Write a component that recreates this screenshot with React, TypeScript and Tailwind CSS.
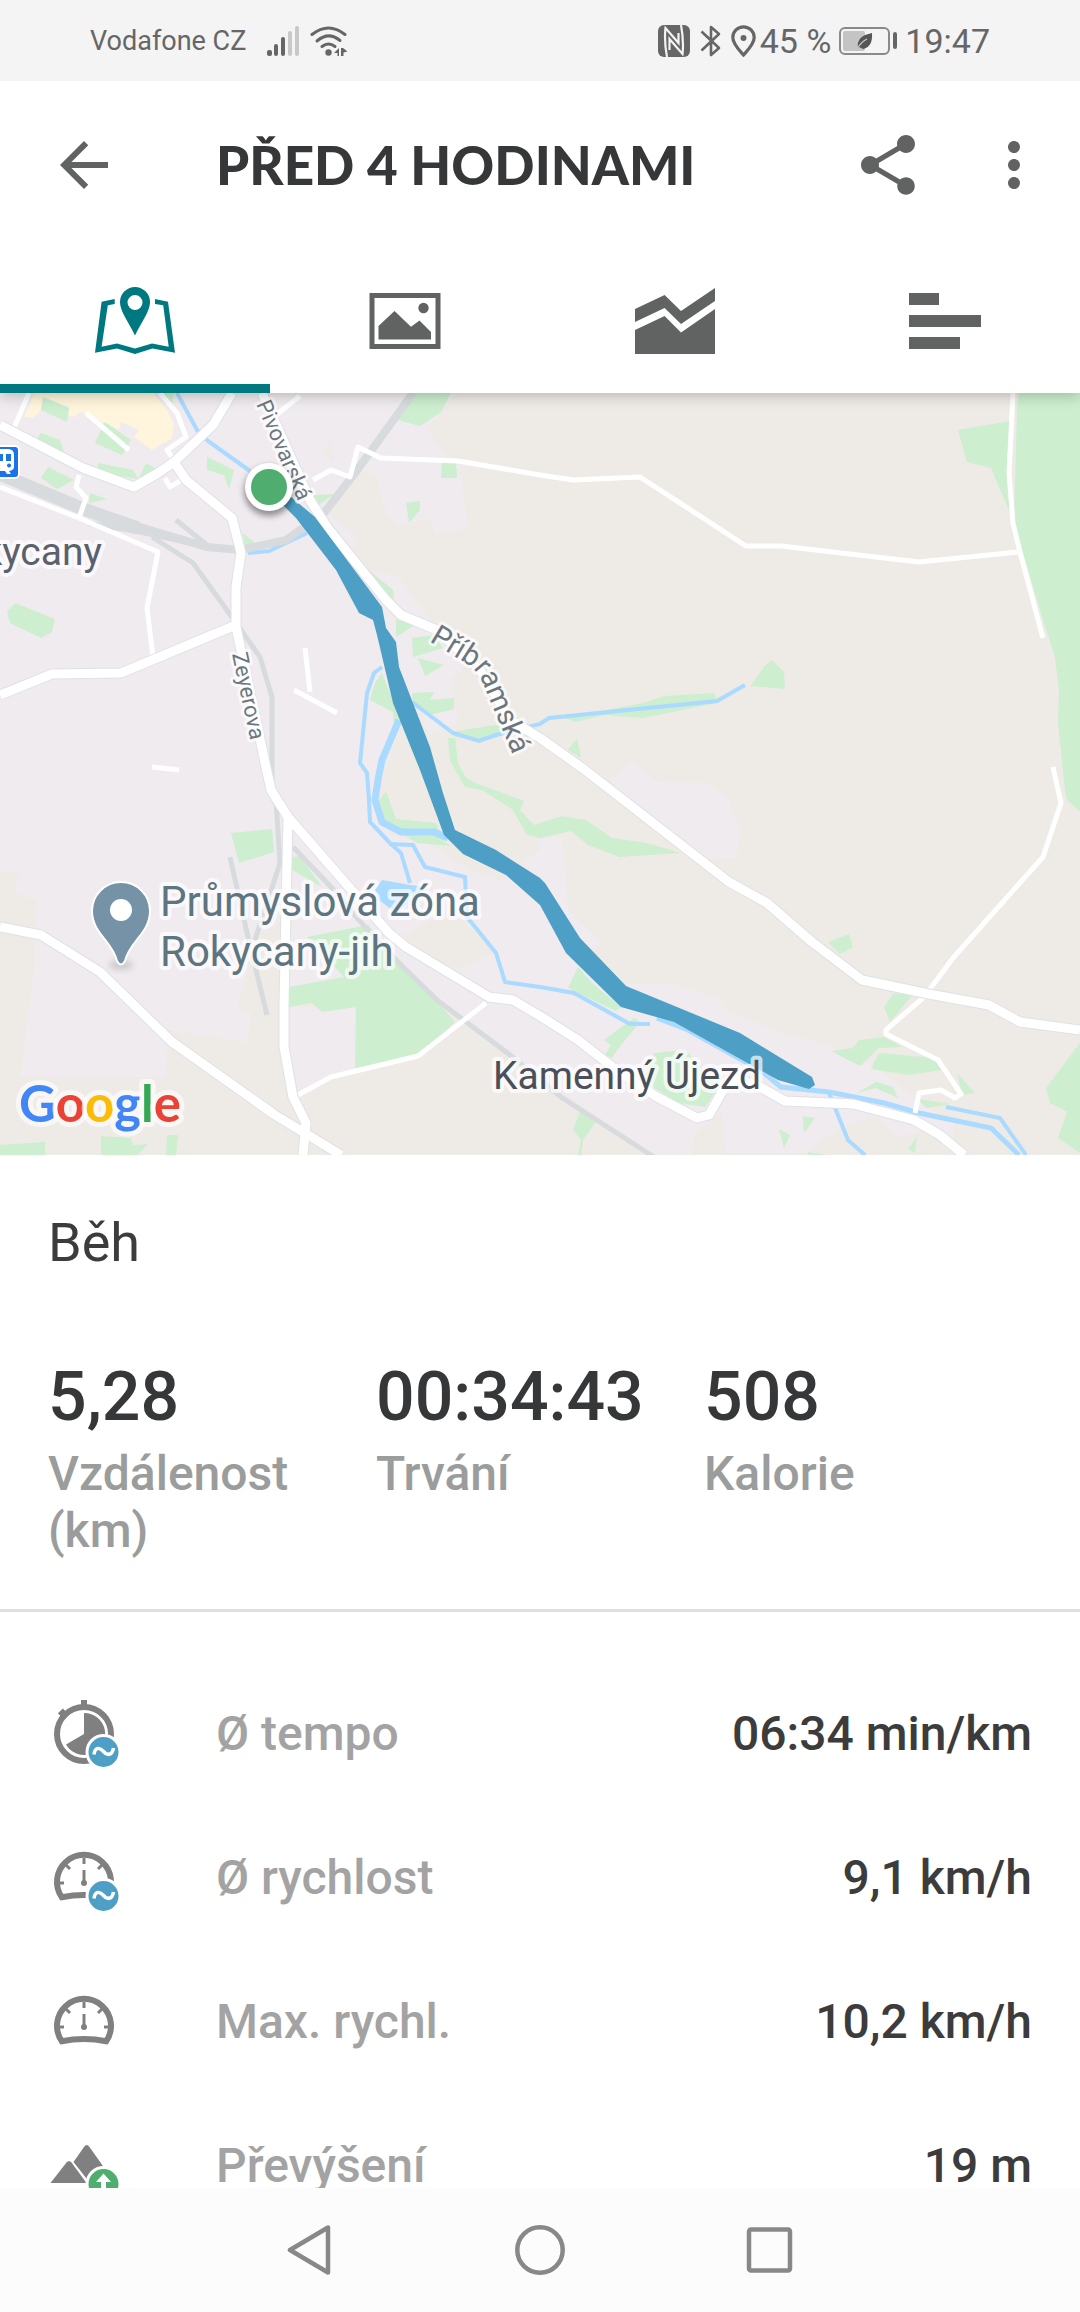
import React from 'react';
import { MdArrowBack, MdMoreVert, MdShare } from 'react-icons/md';

const stats = [
  { value: '5,28', label: 'Vzdálenost (km)' },
  { value: '00:34:43', label: 'Trvání' },
  { value: '508', label: 'Kalorie' },
];

const rows = [
  { icon: <PaceIcon />, label: 'Ø tempo', value: '06:34 min/km' },
  { icon: <SpeedIcon average />, label: 'Ø rychlost', value: '9,1 km/h' },
  { icon: <SpeedIcon />, label: 'Max. rychl.', value: '10,2 km/h' },
  { icon: <ElevationIcon />, label: 'Převýšení', value: '19 m' },
];

const tabs = [
  { name: 'Mapa', icon: <MapTabIcon /> },
  { name: 'Fotky', icon: <PhotoTabIcon /> },
  { name: 'Grafy', icon: <ChartTabIcon /> },
  { name: 'Mezičasy', icon: <SplitsTabIcon /> },
];

function StatusBar() {
  return (
    <div className="relative z-20 flex h-[81px] shrink-0 items-center justify-between bg-[#f4f4f4] px-[90px] text-[#666666]">
      <div className="flex items-center">
        <span className="text-[27px] leading-8">Vodafone CZ</span>
        <svg className="ml-[21px] h-[30px] w-[33px]" viewBox="0 0 33 30" fill="currentColor">
          <rect x="0" y="24" width="5" height="6" rx="2" />
          <rect x="7" y="18" width="4" height="12" rx="2" />
          <rect x="14" y="11" width="4" height="19" rx="2" />
          <rect x="21" y="5" width="4" height="25" rx="2" fill="#c8c8c8" />
          <rect x="28" y="0" width="4" height="30" rx="2" fill="#c8c8c8" />
        </svg>
        <svg className="ml-[10px] h-[30px] w-[38px]" viewBox="0 0 38 30" fill="currentColor">
          <g fill="none" stroke="currentColor" strokeWidth="3" strokeLinecap="round">
            <path d="M2 8.500Q18.500-4.500 35 8.500" />
            <path d="M7 15Q18.500 5 30 14.500" />
            <path d="M12 20.500Q18.500 15.500 25 20.500" />
          </g>
          <circle cx="18.500" cy="26.500" r="3.200" />
          <path d="M24 27l5-5v8h-1.500v-3zM31 22h2l4.500 3.500-4 1V30h-2.500z" />
        </svg>
      </div>
      <div className="flex items-center">
        <svg className="h-8 w-8" viewBox="0 0 32 32">
          <rect width="32" height="32" rx="6" fill="#666666" />
          <g fill="none" stroke="#f4f4f4" strokeWidth="2.200">
            <path d="M9 32Q6 16 7.500 3L20.500 18V8" />
            <path d="M23 0Q26 16 24.500 29L11.500 14V25" />
          </g>
        </svg>
        <svg className="ml-[10px] h-8 w-[21px]" viewBox="0 0 21 32" fill="none" stroke="currentColor" strokeWidth="2.600" strokeLinejoin="round">
          <path d="M1.500 6.500L19 23l-8 7V2l8 7L1.500 25.500" />
        </svg>
        <svg className="ml-[10px] h-8 w-[25px]" viewBox="0 0 25 32">
          <path d="M12.500 1.800A10.700 10.700 0 0 0 1.800 12.500C1.800 19 9 26 12.500 30 16 26 23.200 19 23.200 12.500A10.700 10.700 0 0 0 12.500 1.800z" fill="none" stroke="currentColor" strokeWidth="3.200" />
          <circle cx="12.500" cy="13" r="3" fill="currentColor" />
        </svg>
        <span className="ml-1 text-[34px] leading-10">45 %</span>
        <svg className="ml-2 h-[28px] w-[58px]" viewBox="0 0 58 28">
          <rect x="1" y="1" width="49" height="26" rx="5" fill="none" stroke="#8a8a8a" strokeWidth="2" />
          <rect x="4" y="4" width="22" height="20" rx="2" fill="#c4c4c4" />
          <rect x="54" y="5" width="4" height="17" rx="2" fill="#666666" />
          <path d="M19 21Q17 9 33 6Q34 20 24 22L20 20Z" fill="#555555" />
          <path d="M18 22Q22 15 28 12" fill="none" stroke="#c4c4c4" strokeWidth="1.300" />
        </svg>
        <span className="ml-2 text-[34px] leading-10">19:47</span>
      </div>
    </div>
  );
}

function MapTabIcon() {
  return (
    <svg className="h-[68px] w-20" viewBox="0 0 80 68" fill="currentColor">
      <path d="M19.700 12L6.600 14.700 0 65.700 22 61.500 40 67 57.500 61.500 80 65.700 73 14.700 60 12V17L68.200 18.300 73.700 59.700 57 56.500 40 61.500 22 56.500 6.600 59.700 12.800 18.300 19.700 17Z" />
      <path fillRule="evenodd" d="M40 0A15 15 0 0 0 25 15.500C25 24 34 36 40 48.500 46 36 55 24 55 15.500A15 15 0 0 0 40 0zM40 8a7.500 7.500 0 1 1 0 15 7.500 7.500 0 0 1 0-15z" />
    </svg>
  );
}

function PhotoTabIcon() {
  return (
    <svg className="h-14 w-[72px]" viewBox="0 0 72 56" fill="currentColor">
      <rect x="3" y="2.500" width="66" height="51" fill="none" stroke="currentColor" strokeWidth="5" />
      <circle cx="54.500" cy="15" r="5.200" />
      <path d="M9.500 46.500V33L25.500 18 42 33.700 50.500 27.500 62 39V46.500Z" />
    </svg>
  );
}

function ChartTabIcon() {
  return (
    <svg className="h-[66px] w-20" viewBox="0 0 80 66" fill="currentColor">
      <path d="M0 21L29.600 7 46 23 80 0V13L46 36 29.600 20 0 34Z" />
      <path d="M0 42L29.600 28 46 44.500 80 21V66H0Z" />
    </svg>
  );
}

function SplitsTabIcon() {
  return (
    <svg className="h-14 w-[72px]" viewBox="0 0 72 56" fill="currentColor">
      <rect width="30" height="12" />
      <rect y="22" width="72" height="12" />
      <rect y="44" width="51" height="12" />
    </svg>
  );
}

function AverageBadge() {
  return (
    <>
      <circle cx="55.500" cy="54" r="18" fill="#ffffff" />
      <circle cx="55.500" cy="54" r="15" fill="#4d9fc5" />
      <path d="M46 56.500C47 48.500 52 49.500 55.500 53.500S64 58 65.500 50" fill="none" stroke="#ffffff" strokeWidth="3.600" />
    </>
  );
}

function PaceIcon() {
  return (
    <svg className="h-[72px] w-[72px]" viewBox="0 0 72 72" fill="#808080">
      <circle cx="36" cy="36" r="27" fill="none" stroke="#808080" strokeWidth="6" />
      <rect x="33" y="2" width="6" height="6" />
      <rect x="-3.500" y="-3" width="7" height="6" transform="translate(14.500 15) rotate(-45)" />
      <path d="M36 36V15A21 21 0 1 1 18 46.500Z" />
      <AverageBadge />
    </svg>
  );
}

function SpeedIcon({ average = false }: { average?: boolean }) {
  return (
    <svg className="h-[72px] w-[72px]" viewBox="0 0 72 72" fill="#808080">
      <path d="M13.800 55.200A27 27 0 1 1 58.200 55.200Q36 51 13.800 55.200Z" fill="none" stroke="#808080" strokeWidth="6" />
      <g stroke="#808080" strokeWidth="3">
        <path d="M36 16v6M11 41h5M56 41h5M18 23l4 4M54 23l-4 4" />
        <path d="M36 28v13" />
      </g>
      <circle cx="36" cy="41" r="3" />
      {average && <AverageBadge />}
    </svg>
  );
}

function ElevationIcon() {
  return (
    <svg className="h-[72px] w-[72px]" viewBox="0 0 72 72" fill="#808080">
      <path d="M25.500 32L36 17Q38.700 13 41.500 17L62 46 46 53H42Z" />
      <path d="M2.500 53L18.500 32.500Q21 29.500 23.500 32.500L38.500 53Z" />
      <circle cx="55.500" cy="54" r="18" fill="#ffffff" />
      <circle cx="55.500" cy="54" r="15" fill="#50ad70" />
      <path d="M55.500 43.500L63 52H58V64H53V52H48Z" fill="#ffffff" />
    </svg>
  );
}

const parks = [
  '43,397 69,408 67,422 41,410',
  '105,422 131,440 122,455 95,443',
  '41,433 60,440 64,453 36,440',
  '98,463 133,470 138,479 98,472',
  '146,463 158,470 139,478',
  '48,467 74,480 57,489 41,478',
  '90,493 107,499 89,503',
  '207,457 234,470 229,489 224,475 207,470',
  '162,393 174,393 172,405',
  '413,393 451,393 441,412 420,426 398,420',
  '442,462 456,463 457,478 441,478',
  '406,503 420,501 420,510 409,523',
  '313,495 334,494 319,505',
  '243,533 255,543 245,548',
  '15,603 55,619 52,632 41,638 10,623 7,612',
  '365,567 393,590 394,600 379,587',
  '396,620 418,623 396,637',
  '412,638 434,635 443,648 413,657',
  '418,658 444,665 425,676',
  '412,693 434,692 430,700 454,698 454,709 430,715 413,703',
  '382,673 394,703 400,720 394,730 393,712 370,700 375,683',
  '451,732 496,725 517,730 479,740 455,737',
  '448,738 455,738 458,763 466,778 478,784 524,801 520,810 534,825 540,823 562,816 586,820 612,838 647,843 681,853 619,857 588,845 571,831 540,838 527,835 513,810 482,790 465,787 455,770 450,760',
  '386,792 396,819 436,823 444,842 451,846 417,843 401,833 386,822 377,802',
  '231,833 272,829 274,852 239,863',
  '291,857 300,856 322,887 292,870',
  '307,937 368,925 406,967 455,1022 420,1055 355,1068 356,1007 322,1012 312,1003 289,1007 289,987 344,977',
  '0,1145 45,1142 45,1155 0,1155',
  '101,1136 131,1138 133,1145 148,1144 138,1155 101,1155',
  '167,1135 178,1135 176,1155 166,1155',
  '1019,393 1080,393 1080,812 1067,800 1065,790 1058,723 1059,690 1055,657 1043,620 1014,523 1017,407',
  '958,430 1010,421 1010,513 991,468 967,462',
  '772,660 784,672 785,689 750,686 764,667',
  '715,693 717,703 643,718 605,715 576,722 564,718 643,703 664,696',
  '577,738 581,758 568,750',
  '828,942 849,934 853,947 840,954',
  '893,994 914,993 890,1022 884,1007',
  '831,1051 853,1048 859,1040 884,1037 902,1047 879,1048 860,1066',
  '879,1053 934,1058 941,1070 909,1075 871,1069',
  '857,1093 876,1082 893,1087 898,1098 876,1088',
  '957,1073 975,1093 962,1095',
  '919,1099 950,1104 926,1108',
  '1080,1043 1046,1088 1050,1103 1067,1112 1058,1138 1080,1153',
  '803,1116 815,1118 804,1133',
  '779,1129 790,1135 784,1148',
  '917,1137 915,1153 908,1149',
  '808,1152 826,1155 808,1155',
  '581,1109 597,1120 583,1140 581,1155 578,1155 581,1140 573,1130',
  '578,967 592,983 621,1007 616,1011 568,988',
  '634,1018 640,1022 617,1050 612,1058 605,1055 611,1045 604,1040',
  '654,1053 685,1050 719,1087 705,1107 678,1103 643,1080',
];

const streams = [
  '177,393 197,430 208,441 250,471',
  '248,553 269,551 307,533',
  '382,667 374,673 367,693 360,763 367,773 369,800 370,822 389,842 401,853 410,883',
  '389,844 413,845 425,867 465,877 467,917 496,953 505,982 540,987 574,993 630,1024 650,1024',
  '412,702 453,733 479,741 496,735 540,724 549,718 717,701 745,685',
  '946,1107 1000,1118 1026,1155',
  '829,1093 848,1140 865,1155',
];

const rails = [
  '89,523 145,533 207,547',
  '176,520 213,550',
  '152,537 193,563 234,620 260,657 272,697 272,780',
  '276,800 280,863 255,940',
  '230,857 248,937 267,1015',
  '293,847 331,887 365,927 396,960 437,1000 510,1055 561,1097 654,1157',
];

const lanes = [
  '0,487 79,518 158,552 147,608 153,657',
  '29,393 14,428',
  '86,413 129,450',
  '160,393 177,413 186,437 167,450 174,460',
  '165,478 170,487 181,480',
  '79,475 76,487 86,498 79,518',
  '272,418 300,396',
  '313,480 331,470 350,477 358,447 381,458 458,461 540,475 573,480 640,477 746,546 781,546 919,562 1019,552',
  '1013,393 1009,473 1013,523 1020,552 1043,638',
  '1053,767 1061,803 1043,857 953,958 924,997 886,1030 886,1034 938,1060 961,1094 955,1098 941,1090 919,1093 915,1113',
  '305,648 310,692',
  '294,690 337,713',
  '152,767 179,770',
  '298,1095 331,1077 418,1056 486,1003',
];

const roads = [
  '0,425 83,468 134,487 158,473 174,462 213,425 232,393',
  '174,462 186,480 232,518 241,553 236,587 236,627 266,767 271,790 288,817 389,933 406,947 489,997 513,1000 540,1016 578,1040 619,1072 657,1097 697,1118 709,1115 722,1092 735,1078 760,1087 785,1101 853,1104 914,1120 940,1135 964,1155',
  '288,817 284,1003 284,1047 293,1097 306,1123 303,1155',
  '0,927 41,935 100,972 172,1042 275,1115 341,1155',
  '0,695 52,674 121,673 236,625',
  '262,393 310,500 327,527 386,600 401,615 437,630 480,670 510,720 540,738 585,770 729,882 767,903 812,942 862,980 929,994 989,1005 1020,1022 1080,1030',
];

function RouteMap() {
  return (
    <svg className="block h-[762px] w-full shrink-0 bg-[#eeebe6]" viewBox="0 393 1080 762" preserveAspectRatio="xMidYMid slice">
      <g fill="#efebef">
        <path d="M0 393H455L441 412 427 427 441 450 458 460 461 477 468 528 434 535 431 518 396 527 382 503 377 477 358 470 327 513 358 537 351 553 365 570 400 577 413 597 431 620 475 657 451 680 458 723 430 735 412 700 396 740 375 800 390 835 430 845 470 870 500 880 540 850 540 838 562 837 568 910 602 943 581 957 600 985 669 983 719 997 726 1010 781 1033 822 1043 857 1060 877 1067 919 1103 953 1123 953 1140 929 1130 898 1137 877 1117 850 1123 802 1153 726 1153 722 1113 695 1133 691 1155H654L500 1050 396 960 284 1000 284 920 255 937 248 970 237 1010 251 1013 248 1043 169 1030 165 1077H20L34 970 36 900 14 893 20 872 0 872Z" />
        <path d="M609 780L633 760 657 782 709 783 729 800 740 830 736 858 690 858Z" />
        <path d="M289 1007H356V1068L331 1077 298 1095 289 1050Z" />
      </g>
      <path d="M399 940L430 920 458 917 496 952 458 970 430 957Z" fill="#eeebe6" />
      <path d="M324 454L334 461 333 455 330 440Z" fill="#eeebe6" />
      <polygon points="34,393 24,417 33,418 41,410 43,397 69,407 67,415 74,417 81,412 119,430 121,422 139,430 134,437 152,450 172,438 174,423 165,407 153,393" fill="#fff5dc" />
      <g fill="#cdeecf">
        {parks.map((points) => <polygon key={points} points={points} />)}
      </g>
      <g fill="none" stroke="#aadaff" strokeWidth="4">
        {streams.map((points) => <polyline key={points} points={points} />)}
        <polyline points="657,1018 688,1030 760,1070 781,1087 829,1092 884,1103 919,1113 991,1128 1019,1155" strokeWidth="5" />
        <polyline points="399,720 382,760 378,780 375,800 382,822 401,832 434,832 448,838" strokeWidth="7" />
      </g>
      <polygon points="375,890 382,880 410,885 427,887 396,913 379,900" fill="#aadaff" />
      <g fill="none" stroke="#d7dbdd" strokeWidth="5">
        {rails.map((points) => <polyline key={points} points={points} />)}
        <polyline points="0,474 21,483 86,510 138,528" strokeWidth="13" />
        <polyline points="130,524 207,547 241,550 286,540 324,513 355,473 413,393" strokeWidth="8" />
      </g>
      <g fill="none" stroke="#ffffff" strokeWidth="5" strokeLinejoin="round">
        {lanes.map((points) => <polyline key={points} points={points} />)}
      </g>
      <g fill="none" stroke="#dfe1e6" strokeWidth="11" strokeLinejoin="round">
        {roads.map((points) => <polyline key={points} points={points} />)}
      </g>
      <g fill="none" stroke="#ffffff" strokeWidth="9" strokeLinejoin="round">
        {roads.map((points) => <polyline key={points} points={points} />)}
      </g>
      <polygon
        fill="#4d9fc5"
        points="291,497 315,517 382,607 386,628 396,642 399,667 430,747 443,793 455,830 496,850 540,878 545,883 580,938 626,986 740,1033 812,1077 815,1085 809,1089 778,1080 674,1022 621,1007 566,953 540,905 506,875 463,854 444,835 420,770 393,703 377,635 373,620 359,613 336,570 296,518 281,503"
      />

      <defs>
        <path id="pivovarska" d="M256 404L300 506" />
        <path id="zeyerova" d="M232 654L253 752" />
        <path id="pribramska" d="M429 641L464 662Q478 670 484 686L520 772" />
        <filter id="soft" x="-50%" y="-50%" width="200%" height="200%">
          <feGaussianBlur stdDeviation="3" />
        </filter>
      </defs>
      <g className="font-['Roboto',sans-serif]" stroke="#ffffff" strokeOpacity="0.7" strokeLinejoin="round" style={{ paintOrder: 'stroke' }}>
        <g fill="#6b7680" strokeWidth="6">
          <text fontSize="22"><textPath href="#pivovarska">Pivovarská</textPath></text>
          <text fontSize="22"><textPath href="#zeyerova">Zeyerova</textPath></text>
          <text fontSize="29"><textPath href="#pribramska">Příbramská</textPath></text>
        </g>
        <g strokeWidth="8">
          <text x="102" y="565" fontSize="39" textAnchor="end" fill="#5a616e">Rokycany</text>
          <text x="160" y="916" fontSize="42" fill="#5c7580">Průmyslová zóna</text>
          <text x="160" y="966" fontSize="42" fill="#5c7580">Rokycany-jih</text>
          <text x="493" y="1089" fontSize="39" fill="#4a4f58">Kamenný Újezd</text>
        </g>
      </g>

      <ellipse cx="121" cy="965" rx="12" ry="5" fill="#000000" fillOpacity="0.15" filter="url(#soft)" />
      <path d="M121 882A29 29 0 0 0 92 911C92 933 113 942 117 961Q121 968 125 961C129 942 150 933 150 911A29 29 0 0 0 121 882Z" fill="#7592a6" stroke="#ffffff" strokeWidth="2" />
      <circle cx="121" cy="910" r="11" fill="#ffffff" />

      <rect x="-10" y="446" width="29" height="32" rx="4" fill="#1a73e8" stroke="#ffffff" strokeWidth="2" />
      <path fillRule="evenodd" d="M-4 449H8Q14 449 14 455V467Q14 470 9 471L11 474H7L5 471H-4ZM-4 454V461H3V454ZM6 454V461H11V454ZM9 463.500a2 2 0 1 0 .1 0Z" fill="#ffffff" />

      <circle cx="269" cy="491" r="25" fill="#000000" fillOpacity="0.4" filter="url(#soft)" />
      <circle cx="269" cy="487" r="24" fill="#ffffff" />
      <circle cx="269" cy="487" r="18" fill="#50ad70" />

      <text x="19" y="1122" fontSize="51" className="font-['Lato',sans-serif] font-bold" stroke="#ffffff" strokeOpacity="0.6" strokeWidth="10" strokeLinejoin="round" style={{ paintOrder: 'stroke' }}>
        <tspan fill="#4285f4">G</tspan>
        <tspan fill="#ea4335">o</tspan>
        <tspan fill="#fbbc05">o</tspan>
        <tspan fill="#4285f4">g</tspan>
        <tspan fill="#34a853">l</tspan>
        <tspan fill="#ea4335">e</tspan>
      </text>
    </svg>
  );
}

export default function App() {
  return (
    <div className="flex h-screen flex-col overflow-hidden bg-white font-['Roboto',sans-serif]">
      <StatusBar />

      <header className="relative z-10 shrink-0 bg-white shadow-[0_2px_14px_rgba(0,0,0,0.25)]">
        <div className="flex h-[168px] items-center pr-[30px] pl-12 text-[#616362]">
          <button aria-label="Zpět">
            <MdArrowBack className="h-[72px] w-[72px]" />
          </button>
          <h1 className="ml-24 flex-1 whitespace-nowrap font-['Lato',sans-serif] text-[53px] leading-[64px] font-black text-[#363739]">
            PŘED 4 HODINAMI
          </h1>
          <button aria-label="Sdílet">
            <MdShare className="h-[72px] w-[72px]" />
          </button>
          <button aria-label="Další možnosti" className="ml-[54px]">
            <MdMoreVert className="h-[72px] w-[72px]" />
          </button>
        </div>
        <nav className="grid grid-cols-4">
          {tabs.map((tab, i) => (
            <button
              key={tab.name}
              aria-label={tab.name}
              className={
                i === 0
                  ? 'flex h-36 items-center justify-center border-b-[9px] border-[#00787f] pt-[9px] text-[#00787f]'
                  : 'flex h-36 items-center justify-center text-[#616362]'
              }
            >
              {tab.icon}
            </button>
          ))}
        </nav>
      </header>

      <main className="flex min-h-0 flex-1 flex-col overflow-hidden">
        <RouteMap />

        <section className="shrink-0 border-b-[3px] border-[#e0e0e0] px-12 pt-14 pb-[50px]">
          <h2 className="text-[54px] leading-[64px] text-[#3c3c3c]">Běh</h2>
          <div className="mt-[82px] grid grid-cols-3">
            {stats.map((stat) => (
              <div key={stat.label}>
                <p className="text-[68px] leading-[80px] font-medium text-[#363739]">{stat.value}</p>
                <p className="mt-2 text-[48px] leading-[57px] font-medium text-[#9b9c9c]">{stat.label}</p>
              </div>
            ))}
          </div>
        </section>

        <dl className="shrink-0 px-12 pt-[50px] text-[48px] leading-[56px] font-medium">
          {rows.map((row) => (
            <div key={row.label} className="flex h-36 items-center">
              {row.icon}
              <dt className="ml-24 flex-1 text-[#a3a3a3]">{row.label}</dt>
              <dd className="text-[#3c3c3c]">{row.value}</dd>
            </div>
          ))}
        </dl>
      </main>

      <nav className="flex h-[124px] shrink-0 items-center justify-center gap-[180px] bg-[#fcfcfc] text-[#888888]">
        <button aria-label="Zpět">
          <svg className="h-[50px] w-[50px]" viewBox="0 0 50 50" fill="none" stroke="currentColor" strokeWidth="4.500" strokeLinejoin="round">
            <path d="M43 2.500V47.500L5 25Z" />
          </svg>
        </button>
        <button aria-label="Domů">
          <svg className="h-[50px] w-[50px]" viewBox="0 0 50 50" fill="none" stroke="currentColor" strokeWidth="4.500">
            <circle cx="25" cy="25" r="22.700" />
          </svg>
        </button>
        <button aria-label="Poslední aplikace">
          <svg className="h-[50px] w-[50px]" viewBox="0 0 50 50" fill="none" stroke="currentColor" strokeWidth="4.500">
            <rect x="4" y="4.500" width="41" height="41" rx="2" />
          </svg>
        </button>
      </nav>
    </div>
  );
}
